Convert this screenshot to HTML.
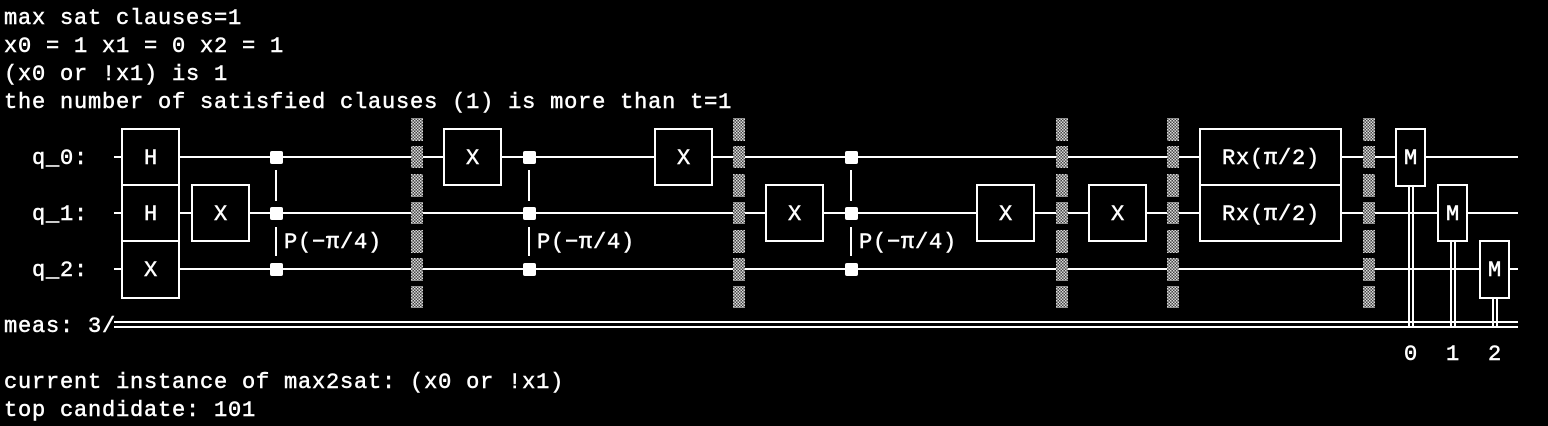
<!DOCTYPE html>
<html><head><meta charset="utf-8"><style>
html,body{margin:0;padding:0;background:#000;width:1548px;height:426px;overflow:hidden}
svg{display:block}
text{font-family:"Liberation Mono",monospace;font-size:22px;letter-spacing:0.8px;fill:#fff;stroke:#fff;stroke-width:0.5px}
</style></head><body>
<svg width="1548" height="426" viewBox="0 0 1548 426" xmlns="http://www.w3.org/2000/svg">
<defs>
<pattern id="st" width="3" height="3" patternUnits="userSpaceOnUse">
<rect width="3" height="3" fill="#444"/><rect width="1.5" height="1.5" fill="#ddd"/><rect x="1.5" y="1.5" width="1.5" height="1.5" fill="#ddd"/>
</pattern>
<g id="bar">
<rect y="118" width="12" height="23"/><rect y="146" width="12" height="22"/><rect y="174" width="12" height="23"/><rect y="202" width="12" height="22"/><rect y="230" width="12" height="23"/><rect y="258" width="12" height="23"/><rect y="286" width="12" height="22"/>
</g>
</defs>
<text x="4" y="24">max sat clauses=1</text>
<text x="4" y="52">x0 = 1 x1 = 0 x2 = 1</text>
<text x="4" y="80">(x0 or !x1) is 1</text>
<text x="4" y="108">the number of satisfied clauses (1) is more than t=1</text>
<text x="4" y="388">current instance of max2sat: (x0 or !x1)</text>
<text x="4" y="416">top candidate: 101</text>

<text x="32" y="164">q_0:</text>
<text x="32" y="220">q_1:</text>
<text x="32" y="276">q_2:</text>
<text x="4" y="332">meas: 3/</text>

<g stroke="#fff" stroke-width="2" fill="none">
<line x1="114" y1="157" x2="1518" y2="157"/>
<line x1="114" y1="213" x2="1518" y2="213"/>
<line x1="114" y1="269" x2="1518" y2="269"/>
<line x1="114" y1="322" x2="1518" y2="322"/>
<line x1="114" y1="327" x2="1518" y2="327"/>
</g>
<g fill="url(#st)">
<use href="#bar" x="411"/>
<use href="#bar" x="733"/>
<use href="#bar" x="1056"/>
<use href="#bar" x="1167"/>
<use href="#bar" x="1363"/>
</g>
<g stroke="#fff" stroke-width="2" fill="#000">
<rect x="122" y="129" width="57" height="169"/>
<line x1="122" y1="185" x2="179" y2="185"/><line x1="122" y1="241" x2="179" y2="241"/>
<rect x="192" y="185" width="57" height="56"/>
<rect x="444" y="129" width="57" height="56"/>
<rect x="655" y="129" width="57" height="56"/>
<rect x="766" y="185" width="57" height="56"/>
<rect x="977" y="185" width="57" height="56"/>
<rect x="1089" y="185" width="57" height="56"/>
<rect x="1200" y="129" width="141" height="112"/>
<line x1="1200" y1="185" x2="1341" y2="185"/>
<line x1="1409" y1="186" x2="1409" y2="327"/><line x1="1413" y1="186" x2="1413" y2="327"/>
<line x1="1451" y1="241" x2="1451" y2="327"/><line x1="1455" y1="241" x2="1455" y2="327"/>
<line x1="1493" y1="298" x2="1493" y2="327"/><line x1="1497" y1="298" x2="1497" y2="327"/>
<rect x="1396" y="129" width="29" height="57"/>
<rect x="1438" y="185" width="29" height="56"/>
<rect x="1480" y="241" width="29" height="57"/>
</g>
<g stroke="#fff" stroke-width="2">
<line x1="276" y1="170" x2="276" y2="201"/><line x1="276" y1="227" x2="276" y2="256"/>
<line x1="529" y1="170" x2="529" y2="201"/><line x1="529" y1="227" x2="529" y2="256"/>
<line x1="851" y1="170" x2="851" y2="201"/><line x1="851" y1="227" x2="851" y2="256"/>
</g>
<g fill="#fff">
<rect x="270" y="151" width="13" height="13" rx="2"/><rect x="270" y="207" width="13" height="13" rx="2"/><rect x="270" y="263" width="13" height="13" rx="2"/>
<rect x="523" y="151" width="13" height="13" rx="2"/><rect x="523" y="207" width="13" height="13" rx="2"/><rect x="523" y="263" width="13" height="13" rx="2"/>
<rect x="845" y="151" width="13" height="13" rx="2"/><rect x="845" y="207" width="13" height="13" rx="2"/><rect x="845" y="263" width="13" height="13" rx="2"/>
</g>
<text x="284" y="248">P(−π/4)</text>
<text x="537" y="248">P(−π/4)</text>
<text x="859" y="248">P(−π/4)</text>
<g text-anchor="middle">
<text x="151" y="164">H</text><text x="151" y="220">H</text><text x="151" y="276">X</text>
<text x="221" y="220">X</text>
<text x="473" y="164">X</text><text x="684" y="164">X</text>
<text x="795" y="220">X</text><text x="1006" y="220">X</text><text x="1118" y="220">X</text>
<text x="1271" y="164">Rx(π/2)</text><text x="1271" y="220">Rx(π/2)</text>
<text x="1411" y="164">M</text><text x="1453" y="220">M</text><text x="1495" y="276">M</text>
<text x="1411" y="360">0</text><text x="1453" y="360">1</text><text x="1495" y="360">2</text>
</g>
</svg>
</body></html>
